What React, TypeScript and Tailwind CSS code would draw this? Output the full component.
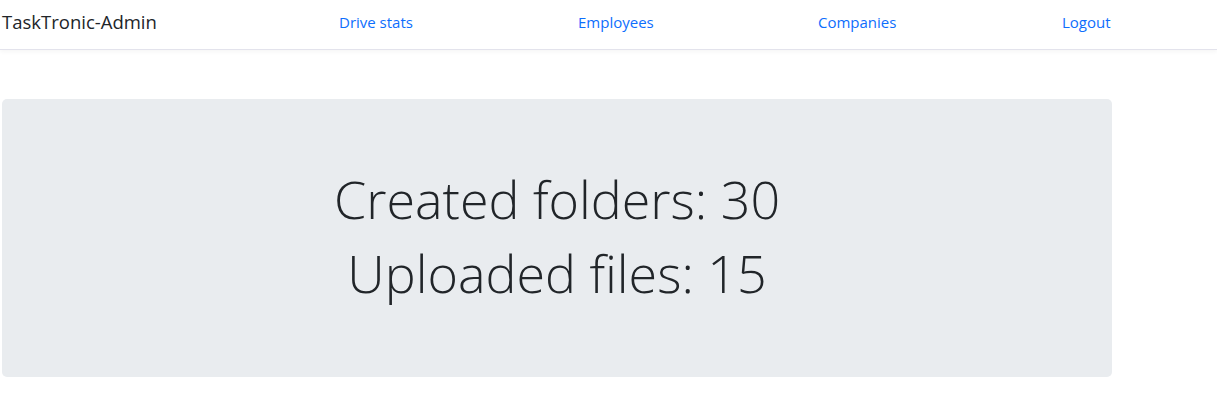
export default function App() {
  return (
    <div className="min-h-[405px] bg-white text-[#212529]" style={{ fontFamily: '"Open Sans", sans-serif' }}>
      {/* Navbar */}
      <header className="h-[50px] pb-[4px] border-b border-[#e3e3ec] shadow-[0_2px_4px_rgba(0,0,0,0.04)] flex items-center">
        <a href="#" className="pl-[2px] w-[339px] shrink-0 text-[18.5px] leading-none text-[#212529]">
          TaskTronic-Admin
        </a>
        <nav className="flex items-center text-[15px] leading-none text-[#0d6efd]">
          <a href="#" className="w-[239px]">Drive stats</a>
          <a href="#" className="w-[240px]">Employees</a>
          <a href="#" className="w-[244px]">Companies</a>
          <a href="#">Logout</a>
        </nav>
      </header>

      {/* Jumbotron */}
      <main className="pt-[49px] pl-[2px]">
        <section className="w-[1110px] h-[278px] rounded-[5px] bg-[#e9ecef] flex flex-col items-center justify-center pb-[4px]">
          <h1 className="text-[52px] leading-[74px] font-light">Created folders: 30</h1>
          <h1 className="text-[52px] leading-[74px] font-light">Uploaded files: 15</h1>
        </section>
      </main>
    </div>
  );
}
